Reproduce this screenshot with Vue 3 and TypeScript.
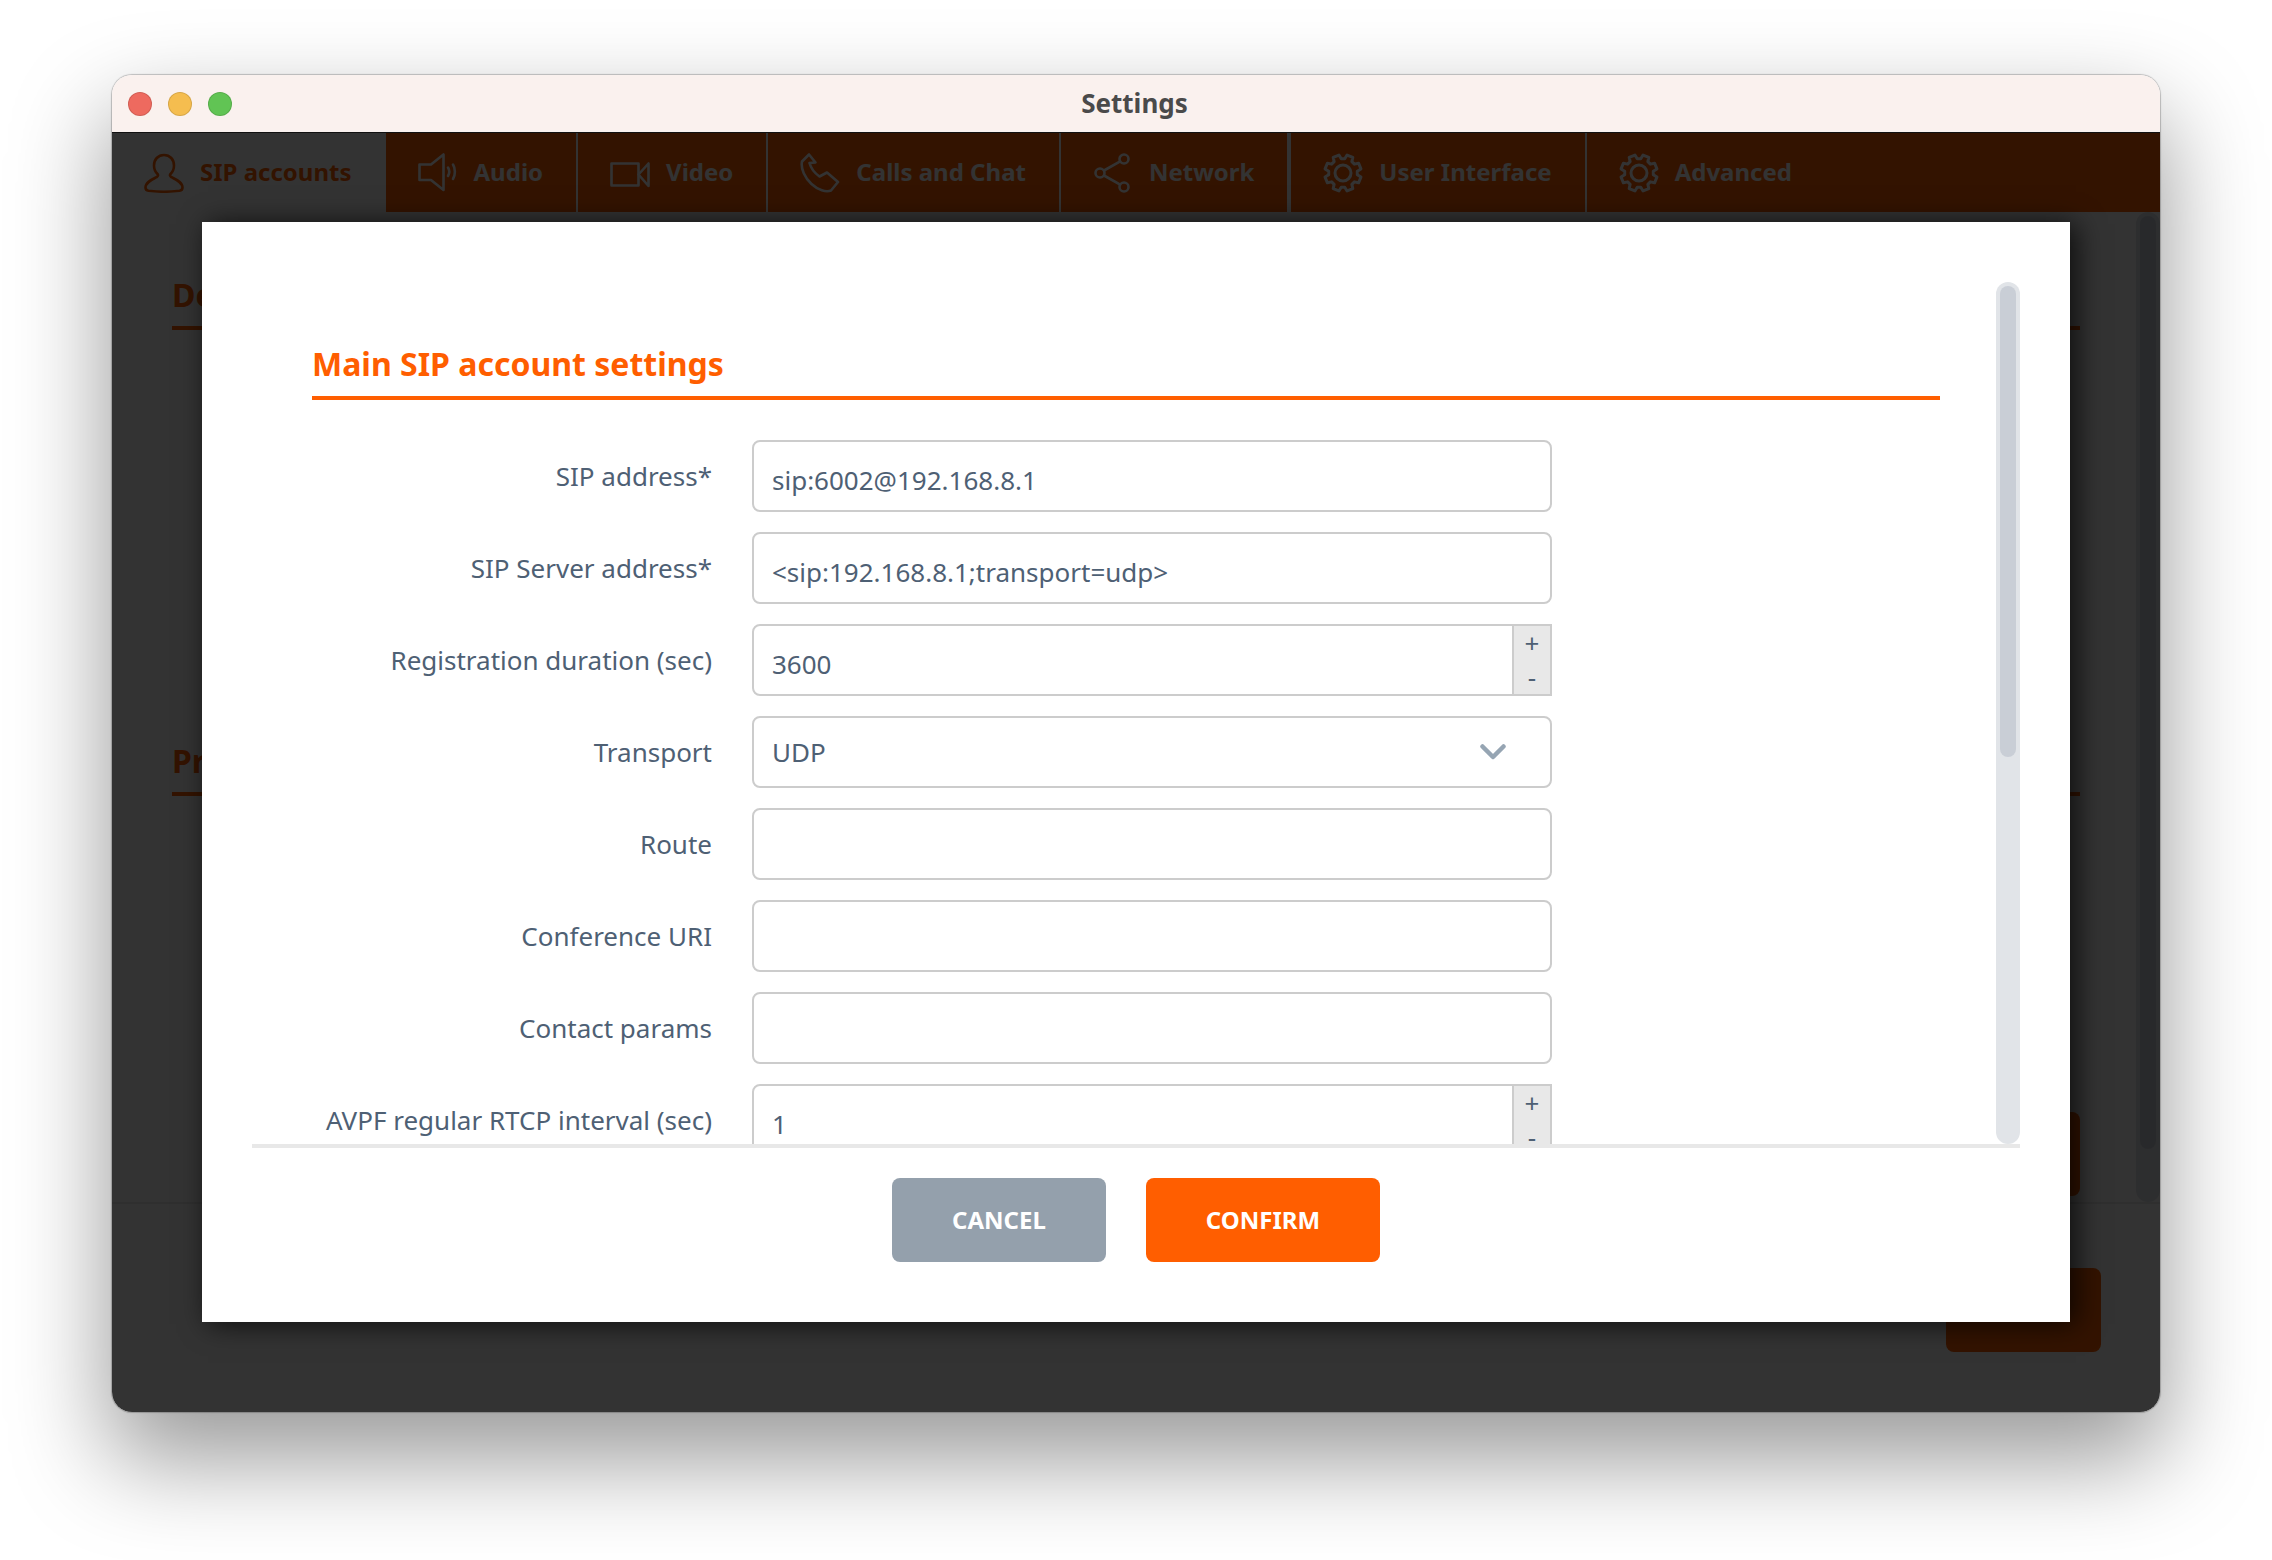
<script setup lang="ts">
type Kind = 'text' | 'number' | 'select'
interface Row { label: string; value: string; kind: Kind }

const rows: Row[] = [
  { label: 'SIP address*', value: 'sip:6002@192.168.8.1', kind: 'text' },
  { label: 'SIP Server address*', value: '<sip:192.168.8.1;transport=udp>', kind: 'text' },
  { label: 'Registration duration (sec)', value: '3600', kind: 'number' },
  { label: 'Transport', value: 'UDP', kind: 'select' },
  { label: 'Route', value: '', kind: 'text' },
  { label: 'Conference URI', value: '', kind: 'text' },
  { label: 'Contact params', value: '', kind: 'text' },
  { label: 'AVPF regular RTCP interval (sec)', value: '1', kind: 'number' },
]

const tabs = [
  { name: 'SIP accounts', icon: 'user', active: true },
  { name: 'Audio', icon: 'audio', active: false },
  { name: 'Video', icon: 'video', active: false },
  { name: 'Calls and Chat', icon: 'phone', active: false },
  { name: 'Network', icon: 'network', active: false },
  { name: 'User Interface', icon: 'gear', active: false },
  { name: 'Advanced', icon: 'gear', active: false },
]

function gearPath(): string {
  const teeth = 8
  const outer = 18.4
  const inner = 14.4
  const pts: string[] = []
  for (let i = 0; i < teeth; i++) {
    const c = (i * 2 * Math.PI) / teeth - Math.PI / 8
    const offsets: [number, number][] = [
      [-0.27, inner],
      [-0.17, outer],
      [0.17, outer],
      [0.27, inner],
    ]
    for (const [da, r] of offsets) {
      const x = 20 + r * Math.cos(c + da)
      const y = 20 + r * Math.sin(c + da)
      pts.push(`${x.toFixed(2)} ${y.toFixed(2)}`)
    }
  }
  return 'M' + pts.join('L') + 'Z'
}
const gear = gearPath()
</script>

<template>
  <div class="window">
    <header class="titlebar">
      <div class="lights">
        <span class="light red"></span>
        <span class="light yellow"></span>
        <span class="light green"></span>
      </div>
      <span class="title">Settings</span>
    </header>

    <div class="body">
      <nav class="tabs">
        <div v-for="t in tabs" :key="t.name" class="tab" :class="{ active: t.active }">
          <svg class="tab-icon" viewBox="0 0 40 40" fill="none" stroke="currentColor" stroke-width="2.6" stroke-linejoin="round" stroke-linecap="round">
            <path v-if="t.icon === 'user'" d="M20 2c-6 0-10 4.500-10 10.500c0 3.500 1.500 6.500 3.500 8.500c1 1 .5 2.500-1 3.200C8 26.500 1.500 29 1.500 34.500c0 2 1 3 3 3.300c10 1.200 21 1.200 31 0c2-.3 3-1.300 3-3.300c0-5.500-6.500-8-11-10.300c-1.500-.7-2-2.200-1-3.200c2-2 3.500-5 3.500-8.500C30 6.500 26 2 20 2Z" />
            <g v-else-if="t.icon === 'audio'">
              <path d="M1.500 11.500H13L25.500 1.500V37L13 27H1.500Z" />
              <path d="M30 14.500c1.500 2.500 1.500 6 0 8.500" />
              <path d="M35 11.500c2.500 4 2.500 10.500 0 14.500" />
            </g>
            <g v-else-if="t.icon === 'video'">
              <rect x="1.500" y="10.500" width="27" height="22" />
              <path d="M28.500 21.500L38.500 10.500V33Z" />
            </g>
            <path v-else-if="t.icon === 'phone'" d="M9 1.500L2 8.500C.5 16 5 25 11.500 31C18 37 26 39.500 31 37.500L38 29L27 19.500L19.500 23.500C14.500 20 11 15.500 9.500 10L15.500 9.500Z" />
            <g v-else-if="t.icon === 'network'">
              <circle cx="31" cy="6" r="4.500" />
              <circle cx="7" cy="20" r="4.500" />
              <circle cx="31" cy="34" r="4.500" />
              <path d="M27.200 8.400L11 17.500M11 22.500L27.200 31.600" />
            </g>
            <g v-else stroke-width="3">
              <path :d="gear" />
              <circle cx="20" cy="20" r="8" />
            </g>
          </svg>
          <span>{{ t.name }}</span>
        </div>
      </nav>

      <div class="page">
        <div class="page-main">
          <section class="back-section first">
            <h2 class="back-heading">Default identity</h2>
          </section>
          <section class="back-section second">
            <h2 class="back-heading">Proxy accounts</h2>
          </section>
          <div class="back-actions"><button class="back-add">ADD</button></div>
        </div>
        <div class="scrollbar page-bar"><div class="thumb page-thumb"></div></div>
      </div>
      <footer class="page-footer"><button class="back-save">SAVE</button></footer>

      <div class="overlay">
        <div class="modal">
          <div class="modal-scroll">
            <div class="modal-content">
              <h1 class="heading">Main SIP account settings</h1>
              <div v-for="r in rows" :key="r.label" class="row">
                <label class="label">{{ r.label }}</label>
                <div v-if="r.kind === 'select'" class="field select">
                  <span>{{ r.value }}</span>
                  <svg class="chevron" viewBox="0 0 26 16" fill="none" stroke="#96a5b3" stroke-width="4.500" stroke-linecap="round" stroke-linejoin="round">
                    <path d="M2.500 2.500L13 13L23.500 2.500" />
                  </svg>
                </div>
                <div v-else class="field" :class="{ number: r.kind === 'number' }">
                  <span class="value">{{ r.value }}</span>
                  <div v-if="r.kind === 'number'" class="spin">
                    <span>+</span>
                    <span>-</span>
                  </div>
                </div>
              </div>
            </div>
            <div class="scrollbar modal-bar"><div class="thumb modal-thumb"></div></div>
          </div>
          <div class="modal-footer">
            <button class="btn cancel">CANCEL</button>
            <button class="btn confirm">CONFIRM</button>
          </div>
        </div>
      </div>
    </div>
  </div>
</template>

<style>
html, body {
  margin: 0;
  background: #ffffff;
}
</style>

<style scoped>
.window {
  box-sizing: border-box;
  width: 2048px;
  height: 1337px;
  margin: 75px 0 148px 112px;
  border-radius: 20px;
  overflow: hidden;
  display: flex;
  flex-direction: column;
  font-family: "Noto Sans", sans-serif;
  box-shadow: 0 44px 96px 4px rgba(0, 0, 0, 0.4), 0 0 1px 1px rgba(0, 0, 0, 0.22);
  position: relative;
}
.titlebar {
  height: 58px;
  flex: none;
  background: #faf1ee;
  border-bottom: 1px solid #111;
  box-sizing: border-box;
  display: flex;
  align-items: center;
  justify-content: center;
  position: relative;
  padding: 0 3px 2px 0;
}
.lights {
  position: absolute;
  left: 16px;
  top: 17px;
  display: flex;
  gap: 16px;
}
.light {
  width: 24px;
  height: 24px;
  border-radius: 50%;
  box-sizing: border-box;
  border: 1px solid rgba(0, 0, 0, 0.12);
}
.red { background: #ee6a5f; }
.yellow { background: #f5bd4f; }
.green { background: #61c454; }
.title {
  font-size: 26px;
  font-weight: 700;
  color: #4a4a4a;
  line-height: 1;
}
.body {
  flex: 1;
  min-height: 0;
  display: flex;
  flex-direction: column;
  position: relative;
  background: #fff;
}
.tabs {
  flex: none;
  height: 79px;
  background: #ff5e00;
  display: flex;
}
.tab {
  display: flex;
  align-items: center;
  gap: 16px;
  padding: 0 33px 0 32px;
  color: #fff;
  font-size: 24px;
  font-weight: 700;
  line-height: 30px;
  padding-bottom: 2px;
  border-right: 2px solid #fff;
}
.tab.active {
  background: #fff;
  color: #ff5e00;
  border-right: none;
  padding-right: 34px;
}
.tab:nth-child(5) { border-right-width: 4px; }
.tab:last-child { border-right: none; }
.tab-icon {
  width: 40px;
  height: 40px;
  flex: none;
  margin-top: 2px;
}
.page {
  flex: 1;
  min-height: 0;
  display: flex;
  border-bottom: 2px solid #eaeaea;
}
.page-main {
  flex: 1;
  padding: 0 56px 0 60px;
  display: flex;
  flex-direction: column;
}
.back-section.first { margin-top: 60px; }
.back-section.second { margin-top: 408px; }
.back-heading {
  margin: 0;
  color: #ff5e00;
  font-size: 32px;
  font-weight: 700;
  line-height: 46px;
  padding-bottom: 8px;
  border-bottom: 4px solid #ff5e00;
}
.back-actions {
  margin-top: 316px;
  display: flex;
  justify-content: flex-end;
}
.back-add, .back-save {
  border: none;
  background: #ff5e00;
  color: #fff;
  border-radius: 8px;
  height: 84px;
  width: 155px;
  font: 700 24px "Noto Sans", sans-serif;
}
.scrollbar {
  flex: none;
  width: 24px;
  box-sizing: border-box;
  padding: 4px;
  background: #e1e4e8;
  border-radius: 12px;
}
.thumb {
  background: #c9ced6;
  border-radius: 8px;
}
.page-thumb { height: 933px; }
.page-footer {
  height: 208px;
  flex: none;
  box-sizing: border-box;
  padding: 64px 59px 0 0;
  display: flex;
  justify-content: flex-end;
}
.overlay {
  position: absolute;
  inset: 0;
  background: rgba(0, 0, 0, 0.8);
  display: flex;
  align-items: flex-start;
  justify-content: center;
  padding-top: 89px;
}
.modal {
  width: 1868px;
  height: 1100px;
  background: #fff;
  display: flex;
  flex-direction: column;
  box-shadow: 6px 2px 26px rgba(0, 0, 0, 0.75);
}
.modal-scroll {
  margin: 60px 50px 0;
  height: 866px;
  flex: none;
  box-sizing: border-box;
  border-bottom: 4px solid #e8e8e8;
  display: flex;
  overflow: hidden;
}
.modal-content {
  flex: 1;
  min-width: 0;
  overflow: hidden;
  padding: 0 56px 0 60px;
}
.modal-bar { height: 862px; }
.modal-thumb { height: 471px; }
.heading {
  margin: 50px 0 40px;
  color: #ff5e00;
  font-size: 32px;
  font-weight: 700;
  line-height: 64px;
  border-bottom: 4px solid #ff5e00;
}
.row {
  display: grid;
  grid-template-columns: 400px 800px;
  gap: 40px;
  align-items: center;
  margin-bottom: 20px;
}
.label {
  text-align: right;
  color: #4e6074;
  font-size: 26px;
}
.field {
  box-sizing: border-box;
  height: 72px;
  border: 2px solid #cccccc;
  border-radius: 8px;
  color: #4e6074;
  font-size: 26px;
  padding: 8px 0 0 18px;
  display: flex;
  align-items: center;
  background: #fff;
  position: relative;
}
.field.select {
  padding: 0 44px 0 18px;
  justify-content: space-between;
}
.chevron {
  width: 26px;
  height: 16px;
}
.field.number {
  border-radius: 8px 0 0 8px;
}
.spin {
  position: absolute;
  top: 0;
  right: 0;
  bottom: 0;
  width: 36px;
  background: #e8e8e8;
  border-left: 2px solid #cccccc;
  display: flex;
  flex-direction: column;
  align-items: center;
  justify-content: space-between;
  font-size: 26px;
  line-height: 34px;
}
.modal-footer {
  flex: 1;
  display: flex;
  justify-content: center;
  align-items: flex-start;
  gap: 40px;
  padding-top: 30px;
}
.btn {
  height: 84px;
  border: none;
  border-radius: 8px;
  color: #fff;
  font: 700 24px "Noto Sans", sans-serif;
  padding: 0 0 2px;
}
.cancel {
  width: 214px;
  background: #94a0ac;
}
.confirm {
  width: 234px;
  background: #ff5e00;
}
</style>
